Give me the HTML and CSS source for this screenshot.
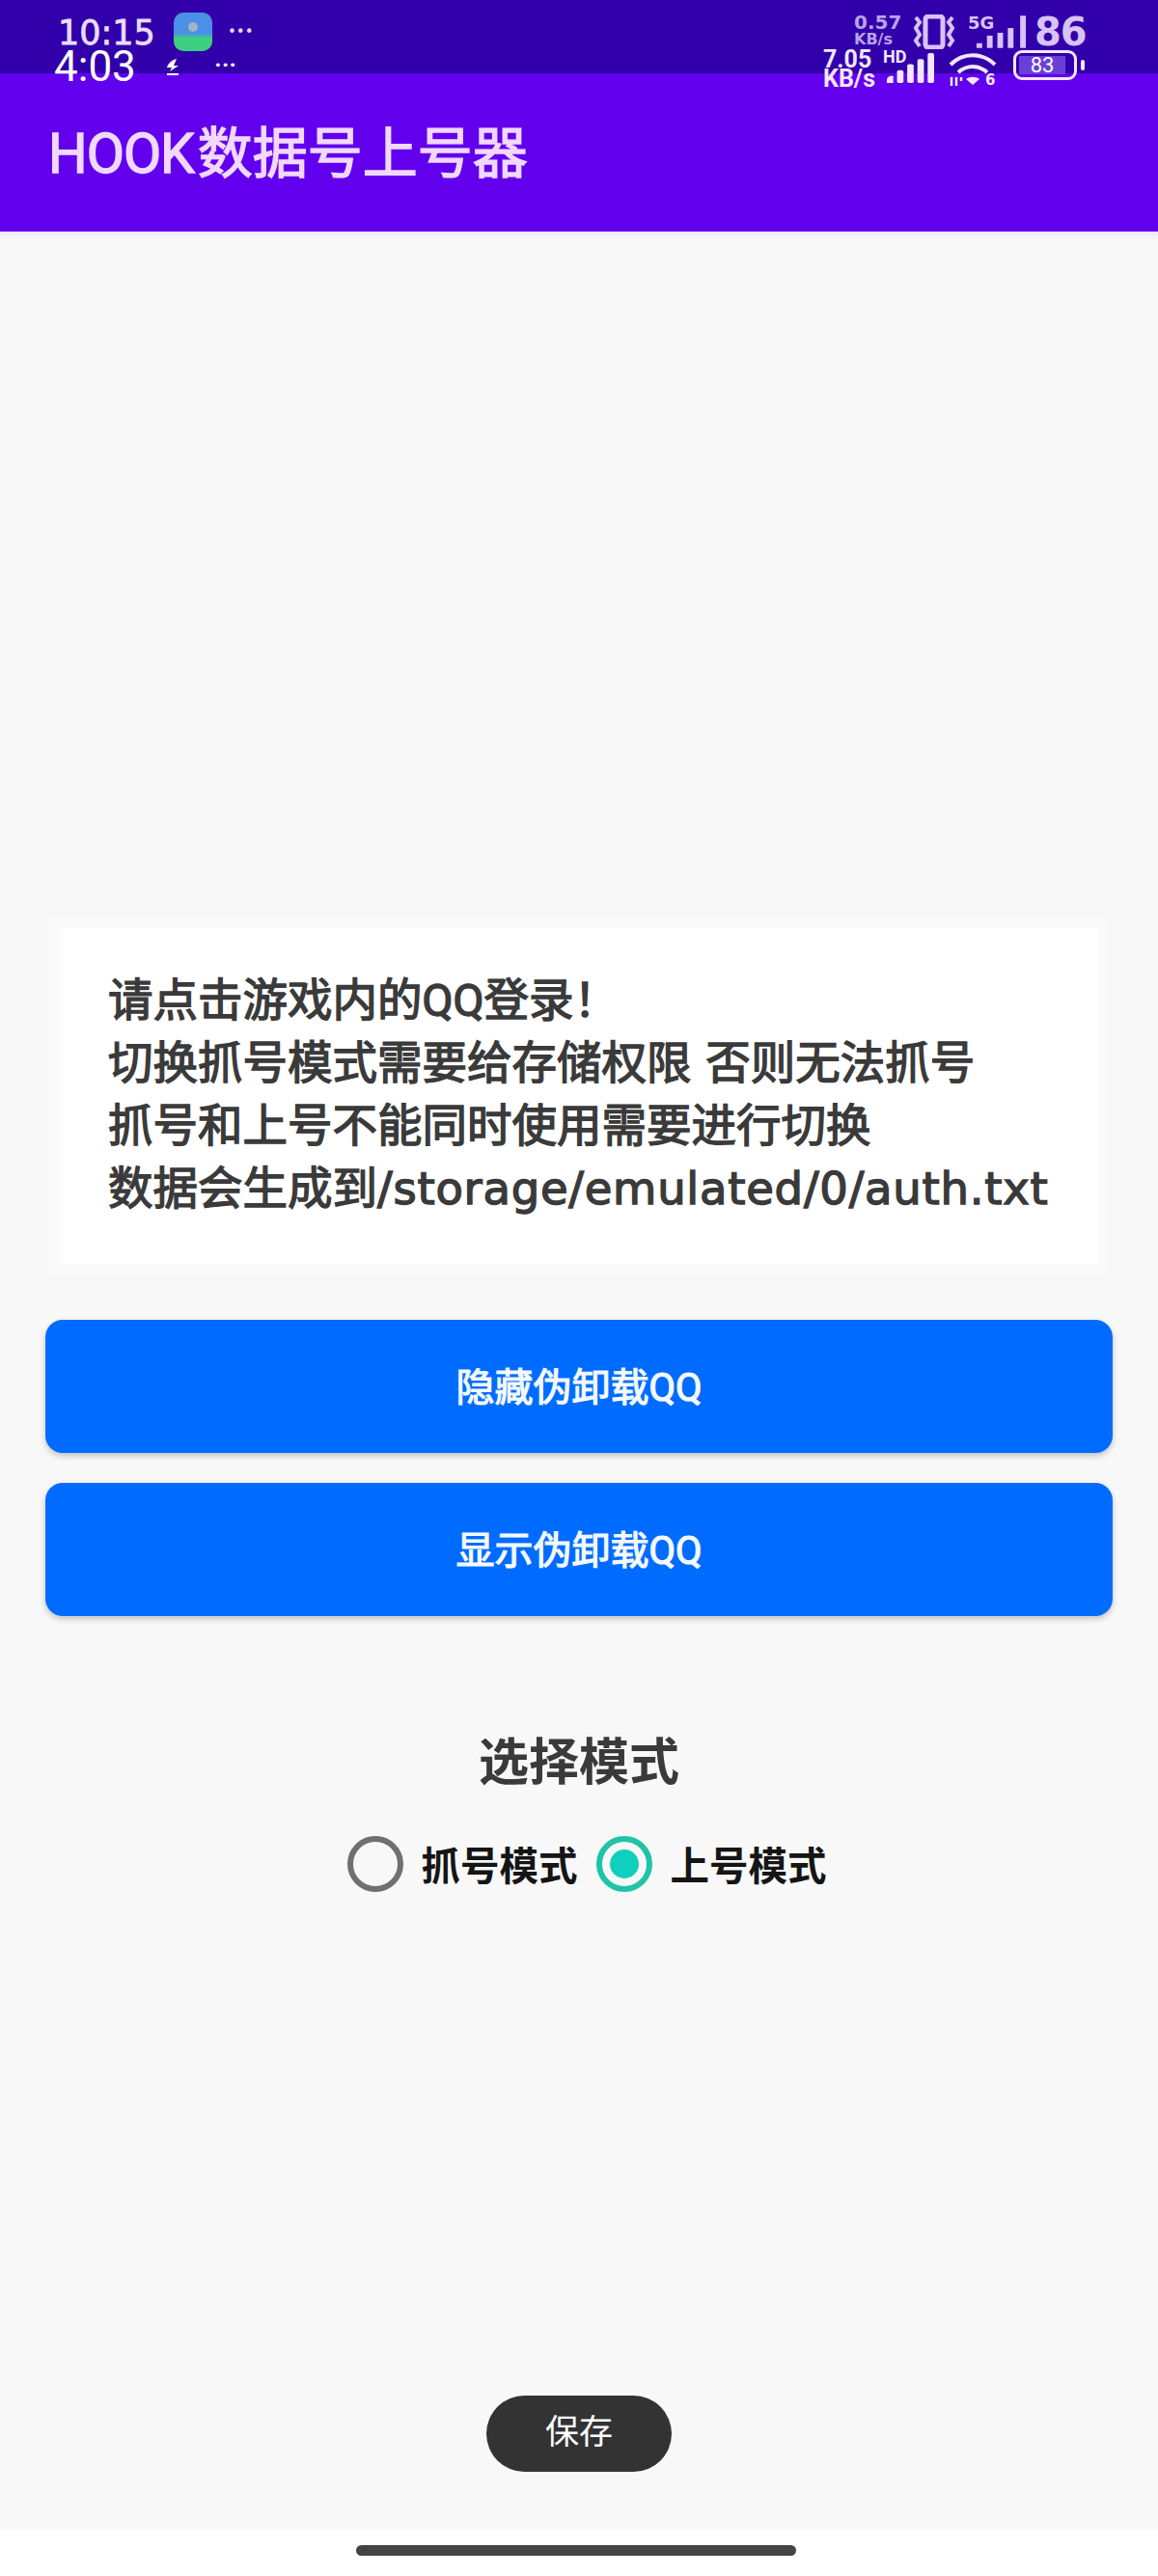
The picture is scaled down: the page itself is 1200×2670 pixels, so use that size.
FILE: index.html
```html
<!DOCTYPE html>
<html lang="zh-CN">
<head>
  <meta charset="UTF-8" />
  <meta name="viewport" content="width=device-width, initial-scale=1.0"/>
  <title>HOOK数据号上号器</title>
  <link rel="stylesheet" href="styles.css">
</head>
<body>

  <div class="app">
    <!-- two status bars, one printed over the other -->
    <div class="status">
      <div class="status-row status-back">
        <div class="status-left">
          <span class="clock-back">10:15</span>
          <span class="app-icon"><i class="app-icon-dot"></i></span>
          <span class="dots-back">•••</span>
        </div>
        <div class="status-right">
          <span class="speed-back">0.57<small>KB/s</small></span>
          <svg class="vibrate" viewBox="0 0 46 36" width="46" height="36">
            <rect x="14" y="2" width="18" height="32" rx="3" fill="none" stroke="#d9c2f5" stroke-width="5"/>
            <path d="M4 3l4 5-4 6 4 7-4 6 4 6M42 3l-4 5 4 6-4 7 4 6-4 6" fill="none" stroke="#d9c2f5" stroke-width="4"/>
          </svg>
          <div class="signal-back">
            <span class="five-g">5G</span>
            <svg viewBox="0 0 58 36" width="57" height="36">
              <g fill="#d9c2f5">
                <rect x="4" y="30" width="6" height="5"/>
                <rect x="15" y="22" width="6" height="13"/>
                <rect x="26" y="19" width="6" height="16"/>
                <rect x="37" y="14" width="6" height="21"/>
                <rect x="50" y="1" width="6" height="34"/>
              </g>
            </svg>
          </div>
          <span class="battery-back">86</span>
        </div>
      </div>
      <div class="status-row status-front">
        <div class="status-left">
          <span class="clock-front">4:03</span>
          <svg class="moon" viewBox="0 0 14 18" width="14" height="18">
            <path d="M11 1C6 2 2 6 1 10h5L4 14l9-6H8l3-7zM1 16h12v2H1z" fill="#fff"/>
          </svg>
          <span class="dots-front">•••</span>
        </div>
        <div class="status-right">
          <span class="speed-front">7.05<br>KB/s</span>
          <div class="signal-front">
            <span class="hd">HD</span>
            <svg viewBox="0 0 52 36" width="50" height="32" preserveAspectRatio="none">
              <g fill="#f3e6ff">
                <path d="M1 32a5 5 0 0 1 7-5v8H1z"/>
                <rect x="12" y="20" width="7" height="15" rx="2"/>
                <rect x="23" y="13" width="7" height="22" rx="2"/>
                <rect x="34" y="7" width="7" height="28" rx="2"/>
                <rect x="45" y="0" width="7" height="35" rx="2"/>
              </g>
            </svg>
          </div>
          <svg class="wifi" viewBox="0 0 50 42" width="50" height="42">
            <g fill="none" stroke="#f3e6ff" stroke-width="4">
              <path d="M2 15C15 2 35 2 48 15"/>
              <path d="M10 23c9-8 21-8 30 0"/>
            </g>
            <path d="M18 30c4-3 10-3 14 0l-7 6z" fill="#f3e6ff"/>
            <path d="M3 28v9M8 28v9M13 28v4" stroke="#f3e6ff" stroke-width="2.5"/>
            <text x="38" y="36" class="wifi-six">6</text>
          </svg>
          <div class="battery">
            <span class="battery-level">83</span>
          </div>
          <span class="battery-nub"></span>
        </div>
      </div>
    </div>

    <header class="toolbar">
      <h1 class="toolbar-title"><span class="hook">HOOK</span>数据号上号器</h1>
    </header>

    <main class="content">
      <div class="notice">
        <p>请点击游戏内的<span class="qq">QQ</span>登录！</p>
        <p>切换抓号模式需要给存储权限 否则无法抓号</p>
        <p>抓号和上号不能同时使用需要进行切换</p>
        <p>数据会生成到<span class="path">/storage/emulated/0/auth.txt</span></p>
      </div>

      <button class="action">隐藏伪卸载<span class="qq">QQ</span></button>
      <button class="action">显示伪卸载<span class="qq">QQ</span></button>

      <h2 class="mode-title">选择模式</h2>
      <div class="mode-group">
        <label class="mode"><span class="radio"></span>抓号模式</label>
        <label class="mode"><span class="radio radio-on"></span>上号模式</label>
      </div>

      <div class="toast">保存</div>
    </main>

    <div class="nav">
      <span class="nav-bar"></span>
    </div>
  </div>

</body>
</html>
```

FILE: styles.css
```css
* {
  box-sizing: border-box;
  margin: 0;
  padding: 0;
}

body {
  background: #fff;
  font-family: "DejaVu Sans", "Noto Sans CJK SC", sans-serif;
}

.app {
  display: flex;
  flex-direction: column;
  height: 2670px;
}

/* status bars */
.status {
  background: #3200aa;
  height: 76px;
  position: relative;
  z-index: 2;
}

.status-row {
  display: flex;
  justify-content: space-between;
}

.status-back {
  height: 52px;
  padding: 13px 73px 0 60px;
}

.status-front {
  height: 40px;
  padding: 0 76px 0 56px;
}

.status-left,
.status-right {
  display: flex;
  align-items: flex-start;
}

.clock-back {
  color: #eadcff;
  font-size: 35px;
  -webkit-text-stroke: 0.8px #eadcff;
  line-height: 42px;
  width: 120px;
}

.app-icon {
  background: linear-gradient(#4b8fe6 55%, #3ccf7f 65%);
  border-radius: 10px;
  display: flex;
  justify-content: center;
  height: 40px;
  width: 40px;
}

.app-icon-dot {
  background: #9fb6c9;
  border-radius: 50%;
  height: 10px;
  margin-top: 10px;
  width: 10px;
}

.dots-back {
  color: #e6d8fb;
  font-size: 15px;
  line-height: 40px;
  margin-left: 16px;
}

.speed-back {
  color: #b9a3ea;
  font-size: 20px;
  font-weight: bold;
  line-height: 20px;
  width: 60px;
}

.speed-back small {
  display: block;
  font-size: 16px;
  line-height: 16px;
}

.vibrate {
  margin-top: 2px;
}

.signal-back {
  margin-left: 12px;
  padding-left: 5px;
  position: relative;
  width: 62px;
}

.signal-back svg {
  display: block;
  margin-top: 2px;
}

.five-g {
  color: #d9c2f5;
  font-size: 18px;
  font-weight: bold;
  left: 0;
  line-height: 16px;
  position: absolute;
  top: 3px;
}

.battery-back {
  color: #d9c2f5;
  font-size: 40px;
  font-weight: bold;
  letter-spacing: -1px;
  line-height: 40px;
  margin-left: 7px;
  width: 55px;
}

.clock-front {
  color: #fff;
  font-family: Roboto, sans-serif;
  font-size: 44px;
  line-height: 34px;
  width: 116px;
}

.moon {
  margin-top: 8px;
}

.dots-front {
  color: #fff;
  font-size: 13px;
  line-height: 32px;
  margin-left: 36px;
}

.speed-front {
  color: #f3e6ff;
  font-family: Roboto, sans-serif;
  font-size: 25px;
  font-weight: bold;
  line-height: 20px;
  width: 62px;
}

.signal-front {
  padding-left: 3px;
  position: relative;
  width: 66px;
}

.signal-front svg {
  display: block;
  margin-top: 3px;
}

.hd {
  color: #f3e6ff;
  font-family: Roboto, sans-serif;
  font-size: 18px;
  font-weight: bold;
  left: 0;
  line-height: 14px;
  position: absolute;
  top: 0;
}

.wifi {
  margin: 0 17px 0 2px;
}

.wifi-six {
  fill: #f3e6ff;
  font-size: 15px;
  font-weight: bold;
}

.battery {
  align-items: center;
  border: 3px solid #f3e6ff;
  border-radius: 9px;
  display: flex;
  height: 31px;
  padding: 0 3px;
  width: 66px;
}

.battery-level {
  background: #6a3fd8;
  color: #fff;
  font-family: Roboto, sans-serif;
  font-size: 22px;
  height: 19px;
  line-height: 19px;
  text-align: center;
  width: 48px;
}

.battery-nub {
  background: #f3e6ff;
  border-radius: 2px;
  height: 11px;
  margin: 10px 0 0 4px;
  width: 4px;
}

/* toolbar */
.toolbar {
  align-items: center;
  background: #6200ee;
  box-shadow: 0 4px 4px #f1e4fb;
  display: flex;
  height: 164px;
  padding: 0 0 8px 50px;
  position: relative;
  z-index: 1;
}

.toolbar-title {
  color: #f0d8ff;
  font-size: 57px;
  font-weight: normal;
  -webkit-text-stroke: 1.4px #f0d8ff;
}

.hook {
  font-family: Roboto, sans-serif;
  letter-spacing: -1px;
  margin-right: 4px;
}

/* main */
.content {
  align-items: center;
  background: #f8f8f8;
  display: flex;
  flex: 1;
  flex-direction: column;
  padding-top: 722px;
  position: relative;
}

.notice {
  background: #fff;
  box-shadow: 0 0 0 10px #fafafa;
  color: #3a3a3a;
  font-size: 46.5px;
  font-weight: normal;
  -webkit-text-stroke: 1.4px #3a3a3a;
  height: 348px;
  padding: 43px 0 0 50px;
  width: 1076px;
}

.notice p {
  line-height: 65px;
  white-space: nowrap;
}

.qq {
  font-family: Roboto, sans-serif;
}

.path {
  letter-spacing: 0.75px;
}

.action {
  background: #006cff;
  border: none;
  border-radius: 18px;
  box-shadow: 0 3px 6px rgba(0,0,0,0.22);
  color: #f4f9ff;
  font-family: inherit;
  font-size: 40px;
  font-weight: normal;
  -webkit-text-stroke: 1.2px #f4f9ff;
  height: 138px;
  padding-bottom: 4px;
  width: 1106px;
}

.notice + .action {
  margin-top: 58px;
}

.action + .action {
  margin-top: 31px;
}

.mode-title {
  color: #3a3a3a;
  font-size: 52px;
  font-weight: bold;
  line-height: 70px;
  margin-top: 117px;
}

.mode-group {
  display: flex;
  gap: 19px;
  margin: 40px 0 0 16px;
}

.mode {
  align-items: center;
  color: #151515;
  display: flex;
  font-size: 40.5px;
  font-weight: bold;
  gap: 19px;
}

.radio {
  border: 6px solid #707070;
  border-radius: 50%;
  height: 58px;
  width: 58px;
}

.radio-on {
  background: #0fd0bc;
  background-clip: content-box;
  border-color: #1fc4a8;
  padding: 8px;
}

.toast {
  background: #333;
  border-radius: 40px;
  color: #fff;
  font-size: 35px;
  height: 79px;
  left: 504px;
  line-height: 76px;
  position: absolute;
  text-align: center;
  top: 2243px;
  width: 192px;
}

/* bottom nav */
.nav {
  align-items: flex-start;
  display: flex;
  height: 48px;
  justify-content: center;
  padding-top: 16px;
}

.nav-bar {
  background: #444;
  border-radius: 6px;
  height: 11px;
  margin-left: -7px;
  width: 456px;
}
```
